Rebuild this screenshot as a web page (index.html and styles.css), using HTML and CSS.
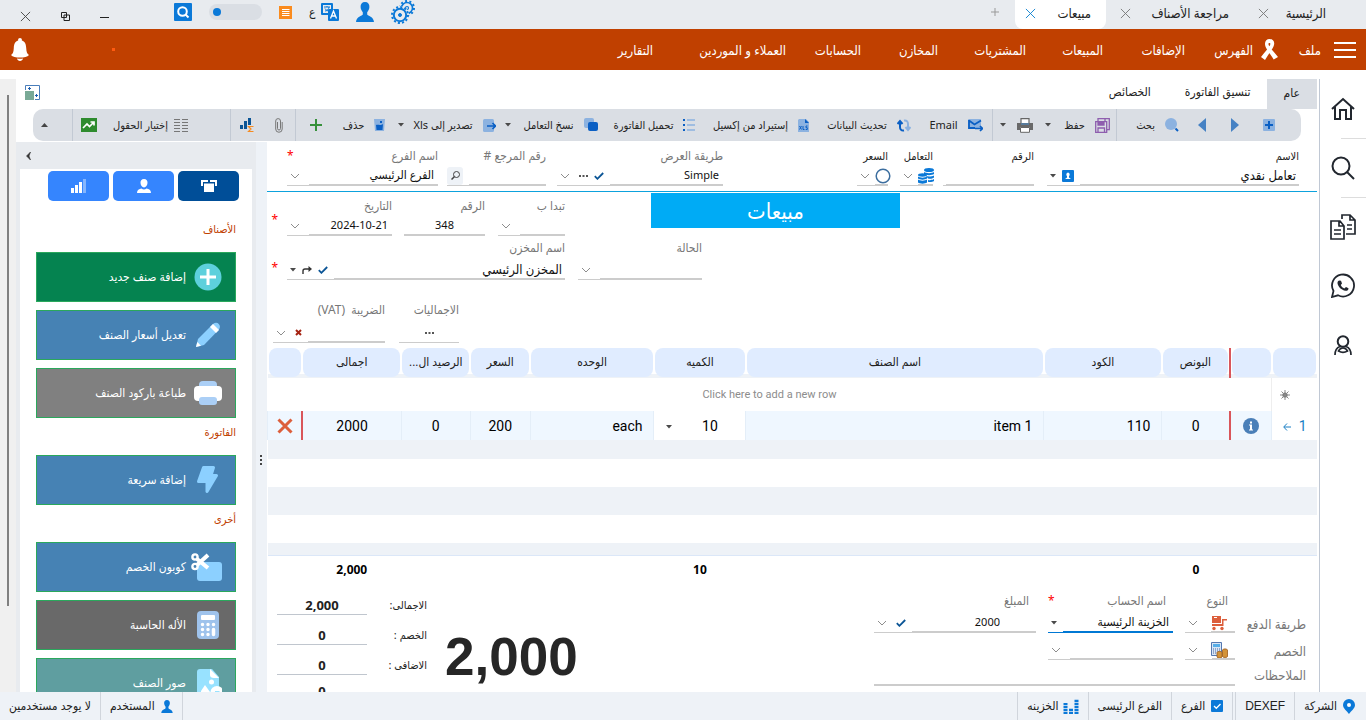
FILE: index.html
```html
<!DOCTYPE html>
<html lang="ar" dir="rtl">
<head>
<meta charset="utf-8">
<title>مبيعات</title>
<link rel="stylesheet" href="styles.css">
</head>
<body>
<svg class="defs" aria-hidden="true">
  <symbol id="chev" viewBox="0 0 10 6"><path d="M1 1l4 4 4-4" fill="none" stroke="#8d8d8d"/></symbol>
  <symbol id="caret" viewBox="0 0 6 4"><path d="M0 0h6L3 3.5z" fill="#4a4a4a"/></symbol>
  <symbol id="check" viewBox="0 0 10 8"><path d="M.8 4.2l2.6 2.6L9.2 1" fill="none" stroke="#0b5596" stroke-width="1.8"/></symbol>
  <symbol id="cross" viewBox="0 0 12 12"><path d="M1 1l10 10M11 1L1 11" fill="none" stroke="currentColor"/></symbol>
  <symbol id="dots" viewBox="0 0 9 2"><path d="M0 0h2v2H0zM3.5 0h2v2h-2zM7 0h2v2H7z" fill="#555"/></symbol>
  <symbol id="user" viewBox="0 0 18 20"><path d="M9 0c3 0 4.600 2 4.400 5-.1 2.500-1.300 4-2.200 5.200v2.300c.5 1.500 6.500 2 6.800 7.500H0c.3-5.500 6.300-6 6.800-7.500v-2.300C5.900 9 4.700 7.500 4.600 5 4.400 2 6 0 9 0z" fill="#0b79d8"/></symbol>
</svg>

<header class="titlebar">
  <nav class="doc-tabs">
    <div class="doc-tab home"><a href="#">الرئيسية</a></div>
    <div class="doc-tab review"><button aria-label="إغلاق"><svg width="11" height="11"><use href="#cross"/></svg></button><a href="#">مراجعة الأصناف</a></div>
    <div class="doc-tab shut"><button aria-label="إغلاق"><svg width="11" height="11"><use href="#cross"/></svg></button></div>
    <div class="doc-tab active"><a href="#">مبيعات</a><button aria-label="إغلاق"><svg width="11" height="11"><use href="#cross"/></svg></button></div>
    <button class="add-tab" aria-label="علامة تبويب جديدة"><svg width="8" height="8" viewBox="0 0 8 8"><path d="M4 0v8M0 4h8" stroke="#999"/></svg></button>
  </nav>
  <div class="sys">
    <button aria-label="إعدادات"><svg width="24" height="24" viewBox="0 0 24 24" fill="none" stroke="#0b79d8"><circle cx="16" cy="8" r="5.500" stroke-width="1.600"/><circle cx="16" cy="8" r="7" stroke-width="2" stroke-dasharray="2 2.400"/><circle cx="16" cy="8" r="1.500" stroke-width="1.200"/><circle cx="9" cy="15" r="8.500" fill="#e8ebef" stroke="#e8ebef"/><circle cx="9" cy="15" r="6.200" stroke-width="2"/><circle cx="9" cy="15" r="8" stroke-width="2" stroke-dasharray="2.100 2.090"/><circle cx="9" cy="15" r="1.500" fill="#0b79d8"/></svg></button>
    <button aria-label="المستخدم"><svg width="18" height="20"><use href="#user"/></svg></button>
    <button class="lang" aria-label="اللغة"><svg width="18" height="18" viewBox="0 0 18 18"><rect width="12" height="12" rx="1" fill="#0b79d8"/><rect x="2" y="2" width="8" height="8" fill="#e8ebef"/><path d="M3 4h6M6 3v1M4 8c2 0 4-2 4-4M4 5.500c1 2 3 2.500 4 2.500" stroke="#0b79d8" fill="none"/><rect x="7" y="6" width="11" height="12" rx="1" fill="#0b79d8"/><path d="M9.500 15.500l3-7.500 3 7.500M10.500 13h4" stroke="#fff" stroke-width="1.300" fill="none"/></svg><span>ع</span></button>
    <button aria-label="قائمة"><svg width="13" height="13" viewBox="0 0 13 13"><path d="M0 0h13v13H0z" fill="#fa8b1e"/><path d="M3 3.500h7.500M3 5.500h7.500M3 7.500h7.500M3 9.500h7.500" stroke="#fff"/></svg></button>
    <button class="toggle" aria-label="الوضع"><i></i></button>
    <button aria-label="بحث"><svg width="18" height="18" viewBox="0 0 18 18"><rect width="18" height="18" rx="1" fill="#0b79d8"/><circle cx="8.500" cy="8.500" r="4.300" fill="none" stroke="#fff" stroke-width="2"/><path d="M11.500 11.500l3 3" stroke="#fff" stroke-width="2"/></svg></button>
    <span class="win">
      <button aria-label="تصغير"><svg width="9" height="10" viewBox="0 0 9 10"><path d="M0 6.500h9" stroke="#222"/></svg></button>
      <button aria-label="استعادة"><svg width="9" height="9" viewBox="0 0 9 9" fill="none" stroke="#222"><path d="M.5.500h5v5h-5zM3 3h5.500v5.500H3z"/></svg></button>
      <button aria-label="إغلاق"><svg width="11" height="11"><use href="#cross"/></svg></button>
    </span>
  </div>
</header>

<nav class="ribbon">
  <button class="burger" aria-label="القائمة"><i></i><i></i><i></i></button>
  <a class="file" href="#">ملف</a>
  <a class="index" href="#"><svg width="17" height="21" viewBox="0 0 17 21" fill="#fff"><path d="M8.500 0C11.500 0 14 2 13 6c-.8 3.200-4 7-6.500 11l-2.500 4L0 18c3-4 7-8 8.800-11.500C9.700 4.600 9.500 4 8.500 4S7 5 8 6.700C10 10 13.500 13.500 17 18l-4.300 2.500C10 16 5 10 4.200 6.500 3.300 2.500 5.500 0 8.500 0z"/></svg>الفهرس</a>
  <div class="menu">
    <a href="#">الإضافات</a><a href="#">المبيعات</a><a href="#">المشتريات</a><a href="#">المخازن</a><a href="#">الحسابات</a><a href="#">العملاء و الموردين</a><a href="#">التقارير</a>
  </div>
  <i class="dot"></i>
  <button class="bell" aria-label="الإشعارات"><svg width="18" height="23" viewBox="0 0 18 23"><path d="M9 0a2 2 0 011.800 2.500C14.500 3.500 15 7 15.200 10c.2 4 1 6 2.800 7-1.500 2-5 2.500-9 2.500S1.500 19 0 17c1.800-1 2.600-3 2.800-7C3 7 3.500 3.500 7.200 2.500A2 2 0 019 0zM6 20.500c2 .4 4 .4 6 0-.4 3.300-5.600 3.300-6 0z" fill="#fff"/></svg></button>
</nav>

<div class="workspace">
  <aside class="rail">
    <a href="#" aria-label="الرئيسية"><svg width="24" height="24" viewBox="0 0 24 24" fill="none" stroke="#22272f" stroke-width="2"><path d="M1 12L12 2l11 10M4 10v12h5v-9h6v9h5V10"/></svg></a>
    <a href="#" class="line" aria-label="بحث"><svg width="24" height="24" viewBox="0 0 24 24" fill="none" stroke="#22272f" stroke-width="2"><circle cx="10" cy="10" r="8.500"/><path d="M16 16l7 7"/></svg></a>
    <a href="#" class="line" aria-label="مستندات"><svg width="26" height="26" viewBox="0 0 26 26" fill="none" stroke="#22272f" stroke-width="1.700"><path d="M12 5V1h8l5 5v14h-9M20 1v5h5M17 11h5M17 15h5M1 7h9l4 5v13H1zM9 7v5h5M4 16h7M4 20h7"/></svg></a>
    <a href="#" aria-label="واتساب"><svg width="25" height="25" viewBox="0 0 25 25" fill="none" stroke="#22272f" stroke-width="1.800"><path d="M1 24l1.500-6A11 11 0 1 1 7 22.300z"/><path d="M8 7.500l2 .2 1 2.700-1.200 1.500c.8 1.800 1.800 2.700 3.500 3.500l1.700-1.300 2.500 1.200c0 2-1.500 2.700-3 2.500-4-.5-7.500-4-8-7.500C6.400 9 7 8 8 7.500z" fill="#22272f" stroke="none"/></svg></a>
    <a href="#" aria-label="حساب"><svg width="18" height="20" viewBox="0 0 18 20" fill="none" stroke="#22272f" stroke-width="2"><circle cx="9" cy="6.500" r="5.300"/><path d="M1 20c0-5 2-7.500 5-8.500M17 20c0-5-2-7.500-5-8.500M4.500 16c2-4 7-4 9 0-2.500 1.500-6.500 1.500-9 0z" stroke-width="1.700"/></svg></a>
  </aside>

  <main class="main">
    <div class="page-tabs">
      <a href="#" class="on">عام</a><a href="#">تنسيق الفاتورة</a><a href="#">الخصائص</a>
      <button class="layout" aria-label="تخطيط"><svg width="15" height="15" viewBox="0 0 15 15"><path d="M.5 5V.5h14v14H10" fill="none" stroke="#4a7ebb"/><path d="M0 6h9v9H0z" fill="#79a996"/><path d="M4.500 2v3M3 3.500h3M11.500 9v3M10 10.500h3" stroke="#1f5fae"/></svg></button>
    </div>

    <div class="toolbar">
      <button class="new" aria-label="جديد"><svg width="12" height="12" viewBox="0 0 12 12"><rect width="12" height="12" rx="1" fill="#8cb2e0"/><path d="M6 2v8M2 6h8" stroke="#0a5fc4" stroke-width="2"/></svg></button>
      <button aria-label="السابق"><svg width="8" height="14" viewBox="0 0 8 14"><path d="M0 0l8 7-8 7z" fill="#4682c4"/></svg></button>
      <button aria-label="التالي"><svg width="8" height="14" viewBox="0 0 8 14"><path d="M8 0L0 7l8 7z" fill="#4682c4"/></svg></button>
      <button class="sep search"><svg width="14" height="14" viewBox="0 0 14 14"><circle cx="6" cy="6" r="6" fill="#8cb2e0"/><path d="M10.500 10.500L13 13" stroke="#0a5fc4" stroke-width="2"/></svg>بحث</button>
      <button><svg width="15" height="15" viewBox="0 0 15 15" fill="none" stroke="#8e5eae" stroke-width="1.300"><path d="M3 3V.700h11.300v11H12"/><path d="M.7 3.700h11v10.600h-11z" fill="#dadee4"/><path d="M3 14v-4h6.500v4M10 1v2"/><path d="M3 4h6v3H3z" fill="#8e5eae"/></svg>حفظ</button>
      <button aria-label="المزيد"><svg width="6" height="4"><use href="#caret"/></svg></button>
      <button aria-label="طباعة"><svg width="16" height="15" viewBox="0 0 16 15"><path d="M4 5V.7h8V5" fill="#fff" stroke="#666" stroke-width="1.200"/><path d="M0 5h16v7h-3V9H3v3H0z" fill="#696969"/><path d="M3.500 9.500h9v4.800h-9z" fill="#fff" stroke="#666"/><path d="M4 6h8" stroke="#4a90d0"/></svg></button>
      <button class="sep" aria-label="المزيد"><svg width="6" height="4"><use href="#caret"/></svg></button>
      <button class="mail"><svg width="15" height="13" viewBox="0 0 15 13"><rect width="13" height="10" rx="1" fill="#8cb2e0"/><path d="M1 1.500l5.500 4L13 1.500M1 1v8h6" fill="none" stroke="#0a5fc4" stroke-width="1.800"/><path d="M7 9.500h7M12 7l2.500 2.500L12 12" fill="none" stroke="#0a5fc4" stroke-width="1.700"/></svg>Email</button>
      <button><svg width="14" height="13" viewBox="0 0 14 13" fill="none" stroke-width="2"><path d="M7 11.500C4 12 3 10 3 8V3M.5 5L3 2l2.500 3" stroke="#0a5fc4"/><path d="M7 1.500C10 1 11 3 11 5v5M8.500 8l2.500 3 2.500-3" stroke="#8cb2e0"/></svg>تحديث البيانات</button>
      <button><svg width="11" height="13" viewBox="0 0 11 13"><path d="M1 0h7l3 3v10H0V1z" fill="#8cb2e0"/><path d="M7 0l4 4H7z" fill="#0a5fc4"/><path d="M1.500 7l2 3.500m0-3.500l-2 3.500M5 7v3.500h1.500M9.500 7H8v1.700h1.300v1.800H7.700" fill="none" stroke="#0a5fc4"/></svg>إستيراد من إكسيل</button>
      <button><svg width="12" height="12" viewBox="0 0 12 12"><path d="M0 0h2v2H0zM0 5h2v2H0zM0 10h2v2H0z" fill="#0a5fc4"/><path d="M4 1h8M4 6h8M4 11h8" stroke="#8cb2e0" stroke-width="1.500"/></svg>تحميل الفاتورة</button>
      <button><svg width="14" height="14" viewBox="0 0 14 14"><rect width="10" height="10" rx="2" fill="#8cb2e0"/><rect x="4" y="4" width="10" height="9" rx="2" fill="#0a5fc4"/></svg>نسخ التعامل</button>
      <button aria-label="المزيد"><svg width="6" height="4"><use href="#caret"/></svg></button>
      <button><svg width="13" height="13" viewBox="0 0 13 13"><rect width="11" height="13" rx="1.500" fill="#8cb2e0"/><path d="M4 7h8M9.500 4L12.500 7l-3 3" fill="none" stroke="#0a5fc4" stroke-width="1.700"/></svg>تصدير إلى Xls</button>
      <button aria-label="المزيد"><svg width="6" height="4"><use href="#caret"/></svg></button>
      <button><svg width="11" height="12" viewBox="0 0 11 12"><path d="M0 0h11l-1 12H1z" fill="#8cb2e0"/><path d="M2 6c2-1 4 1 7-1l-.5 6h-6zM6 2h2v2H6z" fill="#0a5fc4"/></svg>حذف</button>
      <button class="sep" aria-label="إضافة"><svg width="12" height="12" viewBox="0 0 12 12"><path d="M6 0v12M0 6h12" stroke="#37913b" stroke-width="2"/></svg></button>
      <button aria-label="مرفقات"><svg width="8" height="15" viewBox="0 0 8 15"><path d="M2.500 4v6.500a1.500 1.500 0 003 0V3a2.400 2.400 0 00-4.800 0v8a3.200 3.200 0 006.500 0V4" fill="none" stroke="#777"/></svg></button>
      <button class="sep" aria-label="مخطط"><svg width="14" height="14" viewBox="0 0 14 14"><path d="M0 7h3v4H0zM4 3h3v8H4zM8 0h3v7H8z" fill="#0b5596"/><path d="M13.500 8.500h-5L11 11l-2.500 2.500h5" fill="none" stroke="#f58b22" stroke-width="1.200"/></svg></button>
      <button class="cols"><svg width="14" height="13" viewBox="0 0 14 13"><path d="M0 .5h6M0 3.500h6M0 6.500h6M0 9.500h6M0 12.500h6M8 .5h6M8 3.500h6M8 6.500h6M8 9.500h6M8 12.500h6" stroke="#777"/></svg>إختيار الحقول</button>
      <button class="sep" aria-label="رسم بياني"><svg width="16" height="14" viewBox="0 0 16 14"><path d="M0 0h16v14H0z" fill="#2e8b2e"/><path d="M2 10l4-4 2.500 2.500L12 5M9.500 4H13v3.500" fill="none" stroke="#fff" stroke-width="1.700"/></svg></button>
      <button class="fold" aria-label="طي"><svg width="7" height="4" viewBox="0 0 7 4"><path d="M0 4l3.500-4L7 4z" fill="#444"/></svg></button>
    </div>

    <div class="content">
      <section class="form">
        <div class="head">
          <div class="field dark w-name"><label for="name">الاسم</label><div class="ctl"><input id="name" class="big" value="تعامل نقدي"><svg width="12" height="12" viewBox="0 0 12 12"><rect width="12" height="12" rx="1" fill="#0b79d8"/><path d="M6 2.500a2 2 0 011 3.500v1.500l2 1.500H3l2-1.500V6a2 2 0 011-3.500z" fill="#fff"/></svg><svg class="car" width="6" height="4"><use href="#caret"/></svg></div></div>
          <div class="field dark w-num"><label for="no">الرقم</label><div class="ctl"><input id="no"></div></div>
          <div class="field dark w-deal"><label for="deal">التعامل</label><div class="ctl"><select id="deal"></select><svg class="over" width="16" height="16" viewBox="0 0 16 16" fill="#0b79d8"><ellipse cx="11" cy="2" rx="5" ry="2"/><path d="M6 4c2 1.500 8 1.500 10 0v2c-2 1.500-8 1.500-10 0zM8 8c2 .8 6 .6 8-.5v2c-1.500 1.200-4 1.500-6 1zM10 12c2 .4 4.500.2 6-1v2c-1.500 1-4 1.300-6 .8z"/><ellipse cx="4.500" cy="7" rx="4.500" ry="1.700"/><path d="M0 8.500c2 1.500 7 1.500 9 0v2c-2 1.500-7 1.500-9 0zM0 11.500c2 1.500 7 1.500 9 0v3c-2 1.500-7 1.500-9 0z"/></svg><svg class="chev" width="10" height="6"><use href="#chev"/></svg></div></div>
          <div class="field dark w-price"><label for="price">السعر</label><div class="ctl"><select id="price"></select><svg class="over" width="16" height="16" viewBox="0 0 16 16"><circle cx="8" cy="8" r="6.800" fill="#fff" stroke="#3c6e9f" stroke-width="1.500"/></svg><svg class="chev" width="10" height="6"><use href="#chev"/></svg></div></div>
          <div class="field w-view"><label for="view">طريقة العرض</label><div class="ctl"><select id="view"><option>Simple</option></select><svg width="10" height="8"><use href="#check"/></svg><svg width="9" height="2"><use href="#dots"/></svg><svg class="chev" width="10" height="6"><use href="#chev"/></svg></div></div>
          <div class="field w-ref"><label for="ref">رقم المرجع #</label><div class="ctl flush"><input id="ref"><button class="find" aria-label="بحث"><svg width="9" height="9" viewBox="0 0 9 9" fill="none" stroke="#444"><circle cx="5.500" cy="3.500" r="3"/><path d="M3.500 5.500L.5 8.500" stroke-width="1.500"/></svg></button></div></div>
          <div class="field w-branch"><label for="branch">اسم الفرع <b class="req">*</b></label><div class="ctl"><select id="branch" class="mid-size"><option>الفرع الرئيسي</option></select><svg class="chev" width="10" height="6"><use href="#chev"/></svg></div></div>
        </div>

        <div class="row second">
          <h1>مبيعات</h1>
          <div class="field w-start"><label for="start">تبدا ب</label><div class="ctl"><select id="start"></select><svg class="chev" width="10" height="6"><use href="#chev"/></svg></div></div>
          <div class="field w-inv"><label for="inv">الرقم</label><div class="ctl flush"><input id="inv" class="mid" value="348"></div></div>
          <div class="field w-date"><label for="date">التاريخ</label><div class="ctl"><select id="date"><option>2024-10-21</option></select><svg class="chev" width="10" height="6"><use href="#chev"/></svg></div></div>
          <b class="req">*</b>
        </div>
        <div class="row third">
          <div class="field w-state"><label for="state">الحالة</label><div class="ctl"><select id="state"></select><svg class="chev" width="10" height="6"><use href="#chev"/></svg></div></div>
          <div class="field w-store"><label for="store">اسم المخزن</label><div class="ctl"><select id="store" class="big"><option>المخزن الرئيسي</option></select><svg width="10" height="8"><use href="#check"/></svg><svg width="10" height="8" viewBox="0 0 10 8"><path d="M1 8V5c0-1.500 1-2 2-2h4" fill="none" stroke="#333" stroke-width="1.400"/><path d="M6.500 0L10 3 6.500 6z" fill="#333"/></svg><svg class="car" width="6" height="4"><use href="#caret"/></svg></div></div>
          <b class="req">*</b>
        </div>
        <div class="row tax">
          <div class="field w-sums"><label for="sums">الاجماليات</label><div class="ctl flush"><button id="sums" class="more"><svg width="9" height="2"><use href="#dots"/></svg></button></div></div>
          <div class="field w-vat"><label for="vat">الضريبة &nbsp;(VAT)</label><div class="ctl"><select id="vat"></select><svg width="7" height="7" viewBox="0 0 7 7"><path d="M1 1l5 5M6 1L1 6" stroke="#a52312" stroke-width="2"/></svg><svg class="chev" width="10" height="6"><use href="#chev"/></svg></div></div>
        </div>

        <table class="grid">
          <colgroup><col class="c1"><col class="c2"><col class="c3"><col class="c4"><col class="c5"><col class="c6"><col class="c7"><col class="c8"><col class="c9"><col class="c10"><col class="c11"></colgroup>
          <thead><tr><th><span></span></th><th class="bar"><span></span></th><th><span>البونص</span></th><th><span>الكود</span></th><th><span>اسم الصنف</span></th><th><span>الكميه</span></th><th><span>الوحده</span></th><th><span>السعر</span></th><th><span>الرصيد ال...</span></th><th><span>اجمالى</span></th><th><span></span></th></tr></thead>
          <tbody>
            <tr class="add"><td class="star"><svg width="10" height="10" viewBox="0 0 10 10"><circle cx="5" cy="5" r="2.600" fill="#777"/><path d="M5 0v10M0 5h10M1.500 1.500l7 7M8.500 1.500l-7 7" stroke="#888"/></svg></td><td colspan="10" dir="ltr">Click here to add a new row</td></tr>
            <tr class="item">
              <td class="no"><span>1</span><svg width="8" height="8" viewBox="0 0 8 8"><path d="M8 4H1M4 .5L.7 4 4 7.500" fill="none" stroke="#1a7fc4"/></svg></td>
              <td class="bar"><svg width="16" height="16" viewBox="0 0 16 16"><circle cx="8" cy="8" r="8" fill="#4a7fb8"/><path d="M7 3.500h2v2H7zM6 6.500h3v5h1v1H6v-1h1v-4H6z" fill="#fff"/></svg></td>
              <td>0</td><td class="r">110</td><td class="r">item 1</td><td class="qty"><span>10</span><svg width="6" height="4"><use href="#caret"/></svg></td><td class="r">each</td><td>200</td><td>0</td><td class="bar">2000</td>
              <td><button aria-label="حذف"><svg width="16" height="16" viewBox="0 0 16 16"><path d="M1.500 1.500l13 13M14.500 1.500l-13 13" stroke="#dc5f3c" stroke-width="3"/></svg></button></td>
            </tr>
            <tr class="h20 alt"><td colspan="11"></td></tr>
            <tr class="h28"><td colspan="11"></td></tr>
            <tr class="h28 alt"><td colspan="11"></td></tr>
            <tr class="h28"><td colspan="11"></td></tr>
            <tr class="h12 alt"><td colspan="11"></td></tr>
          </tbody>
          <tfoot><tr><td></td><td></td><td>0</td><td></td><td></td><td>10</td><td></td><td></td><td></td><td>2,000</td><td></td></tr></tfoot>
        </table>

        <div class="bottom">
          <div class="pay">
            <span></span><label for="ptype">النوع</label><label for="pacc">اسم الحساب <b class="req">*</b></label><label class="amt" for="pamt">المبلغ</label>
            <span class="cap">طريقة الدفع</span>
            <div class="ctl"><select id="ptype"></select><svg class="over" width="16" height="16" viewBox="0 0 16 16"><path d="M1 1h9v7H1zM11 4h5v1.500h-3.500V11H1V9h10z" fill="#dc5f3c"/><path d="M3 2.500h3" stroke="#fff"/><circle cx="3" cy="13.500" r="1.700" fill="#dc5f3c"/><circle cx="11" cy="13.500" r="1.700" fill="#dc5f3c"/></svg><svg class="chev" width="10" height="6"><use href="#chev"/></svg></div>
            <div class="ctl focus"><select id="pacc" class="mid-size"><option>الخزينة الرئيسية</option></select><svg class="car" width="6" height="4"><use href="#caret"/></svg></div>
            <div class="ctl"><input id="pamt" class="inset" value="2000"><svg width="10" height="8"><use href="#check"/></svg><svg class="chev" width="10" height="6"><use href="#chev"/></svg></div>
            <label class="cap" for="dacc">الخصم</label>
            <div class="ctl"><select aria-label="نوع الخصم"></select><svg class="over" width="17" height="16" viewBox="0 0 17 16"><path d="M.5.500h10v13H.500z" fill="#d9e6f5" stroke="#5578b0"/><path d="M2 2h7v3H2z" fill="#58aee8"/><path d="M2 7h7M2 9h7M2 11h7" stroke="#4565a0" stroke-dasharray="1 1"/><path d="M6 10.500c0-1.500 5-1.500 5 0V15c0 1.300-5 1.300-5 0zM11.500 8c0-1.500 5-1.500 5 0v6.500c0 1.300-5 1.300-5 0z" fill="#d39339" stroke="#9a5a1c" stroke-width=".8"/></svg><svg class="chev" width="10" height="6"><use href="#chev"/></svg></div>
            <div class="ctl"><select id="dacc"></select><svg class="chev" width="10" height="6"><use href="#chev"/></svg></div>
            <span></span>
            <label class="cap" for="notes">الملاحظات</label>
            <div class="ctl flush notes"><input id="notes"></div>
          </div>
          <output class="grand">2,000</output>
          <dl class="sums"><dt>الاجمالى:</dt><dd>2,000</dd><dt>الخصم :</dt><dd>0</dd><dt>الاضافى :</dt><dd>0</dd><dt></dt><dd class="last">0</dd></dl>
        </div>
      </section>

      <div class="splitter"><i></i><i></i><i></i></div>

      <aside class="side">
        <div class="side-head"><button aria-label="طي"><svg width="5" height="8" viewBox="0 0 5 8"><path d="M4.500 0L.5 4l4 4-1.500-4z" fill="#333" stroke="#333" stroke-width=".6"/></svg></button></div>
        <div class="side-body">
          <div class="modes">
            <button class="on" aria-label="الأصناف"><svg width="16" height="13" viewBox="0 0 16 13" fill="#fff"><path d="M0 0h7v2H2v4H0zM9 0h7v6h-2V2H9zM3 3.500h10V12H3z"/></svg></button>
            <button aria-label="العملاء"><svg width="14" height="14" viewBox="0 0 14 14" fill="#fff"><path d="M7 0c2.500 0 3.700 1.700 3.500 4S9 8.500 7 8.500 3.700 6.300 3.500 4 4.500 0 7 0zM0 14c0-3 2-4 4.500-4.500C6 10.700 8 10.700 9.500 9.500 12 10 14 11 14 14z"/></svg></button>
            <button aria-label="التقارير"><svg width="15" height="14" viewBox="0 0 15 14" fill="#fff"><path d="M0 9h3v5H0zM4 6h3v8H4zM8 3h3v11H8z"/><path d="M12 0h3v14h-3z" opacity=".4"/></svg></button>
          </div>
          <h2 class="first">الأصناف</h2>
          <button class="tile green"><svg width="28" height="28" viewBox="0 0 28 28"><circle cx="14" cy="14" r="13.500" fill="#5dd0dc"/><path d="M14 6v16M6 14h16" stroke="#fff" stroke-width="3"/></svg>إضافة صنف جديد</button>
          <button class="tile blue"><svg width="28" height="28" viewBox="0 0 28 28"><path d="M2 26l2-8L19 3c4-3.500 9 1 6 5.500L10 24z" fill="#8cd0ff"/><path d="M16 6l3-3 6 6-3 3z" fill="#fff"/><path d="M2 26l1.300-5 3.700 3.700z" fill="#fff"/></svg>تعديل أسعار الصنف</button>
          <button class="tile gray"><svg width="28" height="26" viewBox="0 0 28 26"><rect x="5" y="1" width="18" height="12" rx="4" fill="#abcff6"/><rect y="6" width="28" height="15" rx="4" fill="#fff"/><rect x="5" y="17" width="18" height="8" rx="3" fill="#abcff6"/></svg>طباعة باركود الصنف</button>
          <h2>الفاتورة</h2>
          <button class="tile blue"><svg width="28" height="28" viewBox="0 0 28 28"><path d="M9.500 1.500h10l-2.500 8h5.500L13 25.500v-10H4.500z" fill="#8cd0ff" stroke="#8cd0ff" stroke-width="3" stroke-linejoin="round"/></svg>إضافة سريعة</button>
          <h2>أخرى</h2>
          <button class="tile blue coupon"><svg width="31" height="28" viewBox="0 0 31 28"><rect x="6" y="9" width="25" height="19" rx="3" fill="#8cd0ff"/><g fill="none" stroke="#fff" stroke-width="2.400"><circle cx="4" cy="4" r="2.600"/><circle cx="4" cy="13.500" r="2.600"/><path d="M6 6l11 9M6 12L17 2" stroke-width="4"/></g></svg>كوبون الخصم</button>
          <button class="tile dim"><svg width="28" height="28" viewBox="0 0 28 28"><rect x="3" width="22" height="28" rx="4" fill="#9fc3ec"/><rect x="7" y="4" width="14" height="5" rx="1" fill="#fff"/><path d="M8.500 13.500h0M14 13.500h0M19.500 13.500h0M8.500 18.500h0M14 18.500h0M8.500 23.500h0M14 23.500h0M19.500 18.500v5" stroke="#fff" stroke-width="3.500" stroke-linecap="round"/></svg>الأله الحاسبة</button>
          <button class="tile teal"><svg width="28" height="28" viewBox="0 0 28 28"><path d="M6 0h12l7 8v20H6q-3 0-3-3V3q0-3 3-3z" fill="#98e2ff"/><path d="M16 0l9 9h-5q-4 0-4-3z" fill="#fff"/><circle cx="17.500" cy="13" r="2.500" fill="#fff"/><path d="M7 22l4-6 5 7v5H7z" fill="#fff"/><ellipse cx="23" cy="23" rx="6.500" ry="6" fill="#fff"/><path d="M21 23h3l-2 3" fill="none" stroke="#98e2ff" stroke-width="2"/></svg>صور الصنف</button>
        </div>
      </aside>
    </div>
  </main>
  <div class="scroll"><i></i></div>
</div>

<footer class="status">
  <div><svg width="12" height="15" viewBox="0 0 12 15"><path d="M6 0a6 6 0 016 6c0 3.500-4 6-6 9-2-3-6-5.500-6-9a6 6 0 016-6z" fill="#0b79d8"/><circle cx="6" cy="6" r="2" fill="#fff"/></svg>الشركة</div>
  <div class="brand">DEXEF</div>
  <div class="dbl"><svg width="12" height="12" viewBox="0 0 12 12"><rect width="12" height="12" rx="1" fill="#0b79d8"/><path d="M3 6l2.300 2.300L9.500 4" fill="none" stroke="#fff" stroke-width="1.300"/></svg>الفرع</div>
  <div>الفرع الرئيسى</div>
  <div class="safe"><svg width="16" height="15" viewBox="0 0 16 15" stroke="#0b79d8" stroke-width="4"><path d="M2.500 15V4M8 15V9M13.500 15V0" stroke-dasharray="2.200 .8"/></svg>الخزينه</div>
  <span class="fill"></span>
  <div class="usr"><svg width="12" height="13" viewBox="0 0 18 20"><use href="#user"/></svg>المستخدم</div>
  <div class="none">لا يوجد مستخدمين</div>
</footer>
</body>
</html>
```
FILE: styles.css
```css
* { box-sizing: border-box; }
body {
  margin: 0;
  height: 100vh;
  display: flex;
  flex-direction: column;
  overflow: hidden;
  background: #fff;
  color: #222;
  font: 11px/16px "Noto Sans", "DejaVu Sans Condensed", "DejaVu Sans", sans-serif;
}
.defs { position: absolute; width: 0; height: 0; }
a { color: inherit; text-decoration: none; white-space: nowrap; }
button { font: inherit; color: inherit; background: none; border: 0; padding: 0; display: flex; align-items: center; justify-content: center; white-space: nowrap; }
svg { flex: none; display: block; }
h1, h2, dl, dd { margin: 0; }

/* title bar */
.titlebar { display: flex; justify-content: space-between; height: 29px; flex: none; background: #e8ebef; font-size: 13px; }
.doc-tabs, .doc-tab, .sys, .win { display: flex; align-items: center; }
.doc-tabs { align-items: stretch; padding-inline-start: 40px; }
.doc-tab { padding-bottom: 3px; color: #222; }
.doc-tab button { color: #777; }
.home { width: 57px; }
.review { gap: 29px; width: 138px; }
.shut { width: 25px; }
.active { justify-content: space-between; width: 91px; padding-inline: 15px 10px; background: #fff; border-radius: 0 0 8px 8px; }
.doc-tab.active button { color: #0a80d0; }
.add-tab { width: 40px; padding-bottom: 5px; }
.sys { gap: 17px; padding-inline-end: 20px; padding-bottom: 5px; }
.lang { gap: 6px; font-size: 12px; }
.toggle { width: 53px; height: 16px; justify-content: flex-end; padding: 4px; border-radius: 8px; background: #dadee4; }
.toggle i { width: 8px; height: 8px; border-radius: 50%; background: #0b79d8; }
.win { gap: 30px; padding-inline-start: 48px; padding-top: 8px; color: #444; }

/* ribbon */
.ribbon { display: flex; align-items: center; height: 41px; flex: none; padding-inline: 10px 11px; background: #c04000; color: #fff; font-size: 13px; }
.burger { flex-direction: column; gap: 5px; width: 22px; }
.burger i { width: 22px; height: 2px; background: #fff; }
.file { margin-inline-start: 13px; width: 43px; }
.index { display: flex; align-items: center; gap: 8px; width: 93px; }
.menu { display: grid; grid-template-columns: 82px 77px 88px 77px 75px 133px 80px; }
.dot { width: 3px; height: 3px; margin-inline-start: auto; background: #ff5a10; }
.bell { margin-inline-start: 83px; }

/* frame */
.workspace { flex: 1; display: flex; min-height: 0; padding-top: 9px; }
.rail { width: 47px; flex: none; border-inline-end: 1px solid #c0c8d4; display: flex; flex-direction: column; }
.rail a { display: flex; align-items: center; justify-content: center; height: 59px; position: relative; }
.rail .line::before { content: ""; position: absolute; top: 0; right: 0; width: 25px; border-top: 1px solid #ddd; }
.main { flex: 1; min-width: 0; display: flex; flex-direction: column; padding-inline-start: 2px; }
.scroll { width: 16px; flex: none; background: #f0f0f0; padding: 16px 7px 86px; }
.scroll i { display: block; width: 2px; height: 100%; background: #808080; }

.page-tabs { display: flex; align-items: stretch; height: 30px; flex: none; gap: 16px; font-size: 12px; }
.page-tabs a { padding: 5px 0 0; padding-inline-end: 18px; }
.page-tabs .on { background: #dadee4; padding: 6px 17px 0; }
.layout { margin-inline: auto 9px; padding-bottom: 4px; }

.toolbar {
  display: grid;
  grid-template-columns: 49fr 35fr 30fr 71fr 58fr 20fr 26fr 20fr 72fr 102fr 114fr 99fr 89fr 16fr 91fr 16fr 58fr 40fr 33fr 32fr 125fr 33fr 39fr;
  height: 32px; flex: none;
  margin-inline: 16px 17px;
  margin-bottom: 1px;
  border-radius: 10px;
  background: #dadee4;
}
.toolbar button { gap: 10px; min-width: 0; }
.toolbar .sep { border-inline-end: 1px solid #c2c9d3; }
.toolbar .cols { padding-inline-start: 34px; gap: 6px; }
.toolbar .new, .toolbar .fold { padding-inline-start: 16px; }
.toolbar .search { justify-content: flex-start; padding-inline-start: 8px; }

.content { flex: 1; display: flex; min-height: 0; }
.form { flex: 1; min-width: 0; display: flex; flex-direction: column; overflow: hidden; border-inline-end: 1px solid #eef2f7; }

/* fields */
.head { display: flex; align-items: flex-start; padding: 6px 18px 5px 20px; border-bottom: 1px solid #0da2dd; }
.row { display: flex; justify-content: flex-end; padding-top: 4px; }
.field { display: flex; flex-direction: column; gap: 2px; }
.field label { color: #777; white-space: nowrap; display: flex; justify-content: space-between; font-size: 12px; }
.dark label { color: #222; font-size: 11px; }
.ctl { display: flex; align-items: center; gap: 6px; height: 20px; border-bottom: 1px solid #ccc; padding-inline-end: 3px; }
.ctl input, .ctl select {
  appearance: none; flex: 1; width: 0; min-width: 0; height: 20px; margin: 0; padding: 0 4px 0 0;
  border: 0; border-bottom: 2px solid #ccc; border-radius: 0; background: none; color: #111;
  font: inherit; opacity: 1; outline: 0;
}
.ctl .mid { text-align: center; padding: 0; }
.ctl .big { font-size: 13px; padding-right: 3px; }
.ctl .mid-size { font-size: 12px; }
.ctl .inset { padding-right: 36px; }
.ctl.flush { padding: 0; }
.chev { margin-inline-start: 3px; }
.over { margin-inline-start: -22px; }
.head .over + .chev { margin-inline-start: -1px; }
.pay .over + .chev { margin-inline-start: 7px; }
.req { color: #f00; font-size: 12px; font-weight: 400; }
.w-name { width: 252px; }
.w-num { width: 91px; margin-inline-start: 13px; }
.w-deal { width: 33px; margin-inline-start: 10px; }
.w-price { width: 31px; margin-inline-start: 12px; }
.w-view { width: 166px; margin-inline-start: auto; }
.w-ref { width: 99px; margin-inline-start: 11px; }
.w-branch { width: 151px; margin-inline-start: 9px; }
.find { width: 16px; height: 18px; background: #eef2f7; border-radius: 3px; }
.second { padding-top: 0; }
.second .field { padding-top: 6px; }
.row .req { width: 11px; margin-inline-start: 9px; padding-top: 20px; }
h1 { width: 249px; height: 35px; margin-top: 1px; margin-inline-end: 86px; background: #00abf5; color: #fff; text-align: center; font-size: 22px; line-height: 34px; font-weight: 400; }
.w-start { width: 67px; }
.w-inv { width: 81px; margin-inline-start: 13px; }
.w-date { width: 105px; margin-inline-start: 12px; }
.w-state { width: 124px; }
.w-store { width: 278px; margin-inline-start: 13px; }
.third .field { gap: 4px; }
.tax { padding: 22px 0 0 6px; }
.tax .field { gap: 5px; }
.w-sums { width: 60px; }
.w-vat { width: 112px; margin-inline-start: 14px; }
.more { width: 100%; height: 16px; }

/* grid */
.grid { width: 100%; margin-top: 5px; table-layout: fixed; border-collapse: collapse; font: 14px/16px Roboto, "DejaVu Sans Condensed", "DejaVu Sans", sans-serif; color: #000; }
.c1 { width: 4.300%; } .c2 { width: 4%; } .c3 { width: 6.480%; } .c4 { width: 11.240%; } .c5 { width: 28.400%; } .c6 { width: 8.760%; }
.c7 { width: 11.800%; } .c8 { width: 5.700%; } .c9 { width: 6.580%; } .c10 { width: 9.430%; } .c11 { width: 3.310%; }
.grid th, .grid td { padding: 0; text-align: center; font-weight: 400; }
.grid th { background: linear-gradient(#fff 26px, #eef2f7 26px); font-size: 12px; color: #222; }
.grid th span { display: block; height: 29px; margin: 0 1px 1px; line-height: 28px; border-radius: 8px; background: #e0ecff; white-space: nowrap; overflow: hidden; }
.grid .bar { border-left: 2px solid #d9565b; }
.grid .add { height: 33px; color: #8c8c8c; font-size: 11px; }
.grid .add .star { border-left: 1px solid #eee; padding-right: 20px; }
.grid svg { display: inline-block; vertical-align: middle; }
.item { height: 29px; background: #eff7ff; }
.grid .item td:not(.bar) { border-left: 1px solid #e4eef8; }
.grid .item .no, .grid .item .qty { background: #fff; }
.grid .no { color: #1a7fc4; }
.no span { margin-inline-end: 8px; }
.qty span { margin-inline: 16px 30px; }
.grid .item .r { text-align: right; padding-right: 11px; }
.item button { margin: auto; }
.alt { background: #eef2f7; }
.h20 { height: 19px; } .h28 { height: 28px; } .h12 { height: 12px; }
.grid tfoot tr { height: 29px; border-top: 1px solid #dbe7f8; font: 12px/16px "Noto Sans", sans-serif; }
.grid tfoot td { font-weight: 700; }

/* totals and payment */
.bottom { flex: 1; min-height: 0; display: flex; align-items: flex-start; padding-inline: 11px 10px; }
.pay { display: grid; grid-template-columns: 59px 50px 125px 162px; column-gap: 12px; margin-top: 9px; color: #777; font-size: 12px; }
.pay > * { min-width: 0; white-space: nowrap; }
.pay label:not(.cap) { display: flex; justify-content: space-between; padding-inline-start: 7px; height: 20px; }
.pay .amt { padding: 0; }
.pay .cap { padding-top: 3px; font-size: 13px; }
.pay .ctl { margin-bottom: 7px; font-size: 11px; }
.pay .cap[for="notes"] { padding-top: 0; }
.pay .notes { grid-column: 2 / -1; margin-top: -1px; }
.focus, .ctl.focus select { border-color: #0078d4; }
.grand { margin-top: 43px; margin-inline: auto 18px; font: 700 53px/60px "Liberation Sans", sans-serif; color: #262626; }
.sums { display: grid; grid-template-columns: 60px 90px; grid-auto-rows: 30px; }
.sums dt { line-height: 42px; white-space: nowrap; }
.sums dd { border-bottom: 1px solid #c0c6ce; text-align: center; font-weight: 700; font-size: 13px; line-height: 42px; height: 31px; }
.sums .last { line-height: 34px; }

/* side panel */
.splitter { width: 10px; flex: none; background: #eef2f7; display: flex; flex-direction: column; align-items: center; justify-content: center; gap: 2px; padding-top: 86px; }
.splitter i { width: 2px; height: 2px; background: #444; }
.side { width: 240px; flex: none; display: flex; flex-direction: column; background: #e8ebef; padding-inline: 4px; }
.side-head { height: 27px; flex: none; display: flex; justify-content: flex-end; padding-inline-end: 6px; }
.side-body { flex: 1; min-height: 0; overflow: hidden; background: #fff; padding: 2px 16px 0; }
.modes { display: flex; gap: 4px; margin-right: -3px; width: 191px; }
.modes button { flex: 1; height: 30px; border-radius: 5px; background: #3585fe; }
.modes .on { background: #004e98; }
h2 { font-size: 11px; font-weight: 400; line-height: 28px; color: #c04000; padding-bottom: 9px; }
h2.first { padding-top: 14px; }
.tile { width: 100%; height: 50px; justify-content: flex-start; gap: 8px; padding-inline-start: 13px; border: 1px solid #2aa85c; color: #fff; font-size: 12px; }
.tile + .tile { margin-top: 8px; }
.coupon { gap: 5px; }
.green { background: #058350; } .blue { background: #4682b4; } .gray { background: #808080; } .dim { background: #696969; } .teal { background: #5f9ea0; }

/* status bar */
.status { height: 28px; flex: none; display: flex; align-items: stretch; background: #eef2f7; padding-inline-start: 2px; font-size: 12px; }
.status div { display: flex; align-items: center; gap: 6px; padding-inline: 9px; border-inline-end: 1px solid #d0d5dc; white-space: nowrap; }
.status .brand { font: 12px/16px "Liberation Sans", sans-serif; }
.status .dbl { border-inline-start: 1px solid #d0d5dc; margin-inline-start: 2px; }
.status .safe { gap: 4px; }
.fill { flex: 1; }
.status .usr { border-inline-start: 1px solid #d0d5dc; }
.status .none { border: 0; }
```
